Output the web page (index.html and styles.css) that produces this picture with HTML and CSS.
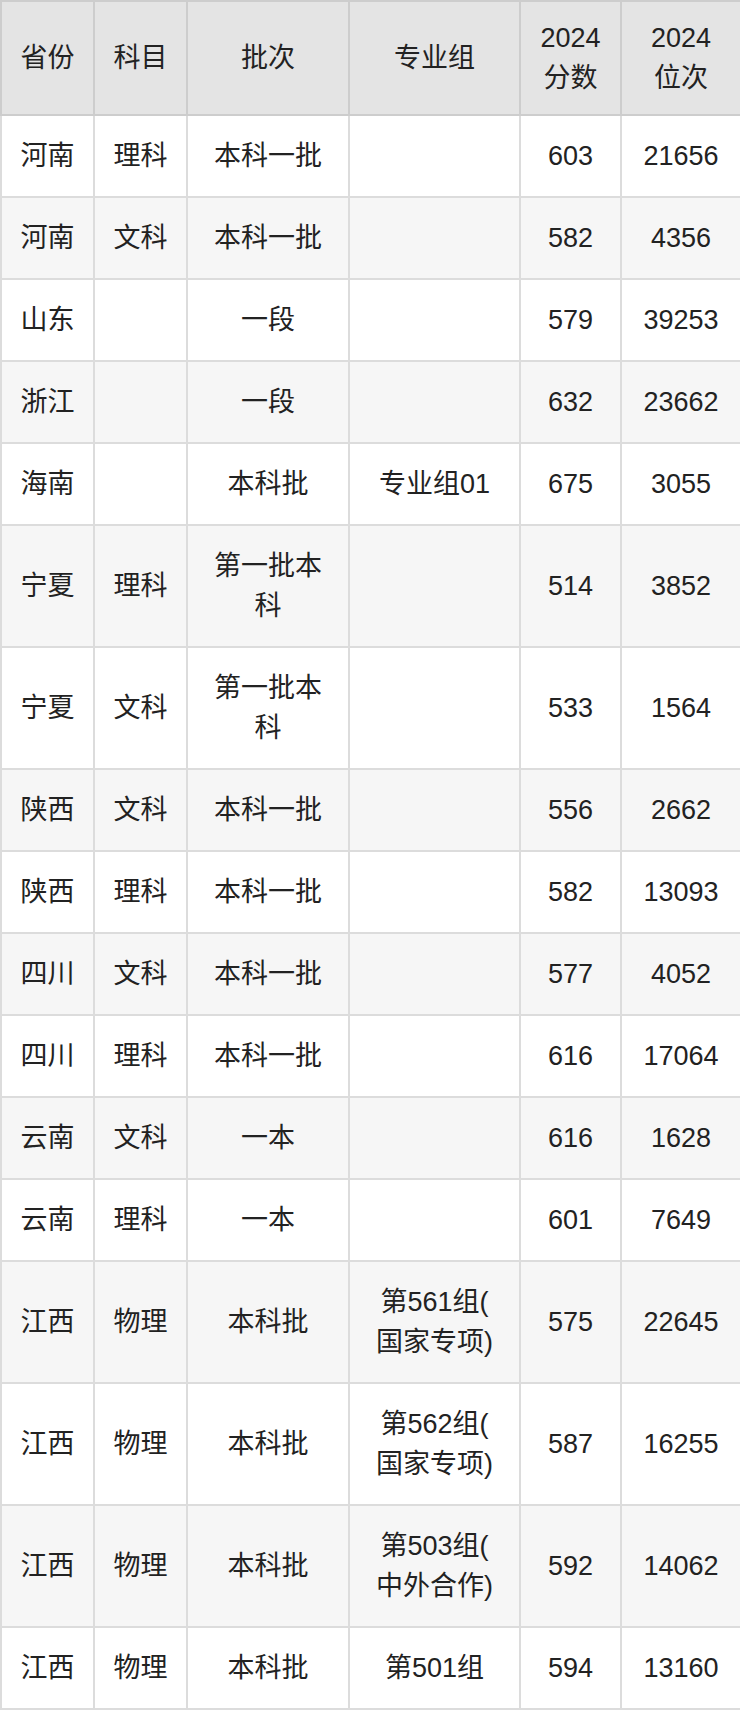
FILE: index.html
```html
<!DOCTYPE html>
<html lang="zh">
<head>
<meta charset="utf-8">
<title>2024 分数位次</title>
<link rel="stylesheet" href="styles.css">
</head>
<body>
<table class="score-table">
  <colgroup>
    <col class="c-prov">
    <col class="c-subj">
    <col class="c-batch">
    <col class="c-group">
    <col class="c-score">
    <col class="c-rank">
  </colgroup>
  <thead>
    <tr>
      <th>省份</th>
      <th>科目</th>
      <th>批次</th>
      <th>专业组</th>
      <th>2024<br>分数</th>
      <th>2024<br>位次</th>
    </tr>
  </thead>
  <tbody>
    <tr><td>河南</td><td>理科</td><td>本科一批</td><td></td><td>603</td><td>21656</td></tr>
    <tr><td>河南</td><td>文科</td><td>本科一批</td><td></td><td>582</td><td>4356</td></tr>
    <tr><td>山东</td><td></td><td>一段</td><td></td><td>579</td><td>39253</td></tr>
    <tr><td>浙江</td><td></td><td>一段</td><td></td><td>632</td><td>23662</td></tr>
    <tr><td>海南</td><td></td><td>本科批</td><td>专业组01</td><td>675</td><td>3055</td></tr>
    <tr><td>宁夏</td><td>理科</td><td>第一批本<br>科</td><td></td><td>514</td><td>3852</td></tr>
    <tr><td>宁夏</td><td>文科</td><td>第一批本<br>科</td><td></td><td>533</td><td>1564</td></tr>
    <tr><td>陕西</td><td>文科</td><td>本科一批</td><td></td><td>556</td><td>2662</td></tr>
    <tr><td>陕西</td><td>理科</td><td>本科一批</td><td></td><td>582</td><td>13093</td></tr>
    <tr><td>四川</td><td>文科</td><td>本科一批</td><td></td><td>577</td><td>4052</td></tr>
    <tr><td>四川</td><td>理科</td><td>本科一批</td><td></td><td>616</td><td>17064</td></tr>
    <tr><td>云南</td><td>文科</td><td>一本</td><td></td><td>616</td><td>1628</td></tr>
    <tr><td>云南</td><td>理科</td><td>一本</td><td></td><td>601</td><td>7649</td></tr>
    <tr><td>江西</td><td>物理</td><td>本科批</td><td>第561组(<br>国家专项)</td><td>575</td><td>22645</td></tr>
    <tr><td>江西</td><td>物理</td><td>本科批</td><td>第562组(<br>国家专项)</td><td>587</td><td>16255</td></tr>
    <tr><td>江西</td><td>物理</td><td>本科批</td><td>第503组(<br>中外合作)</td><td>592</td><td>14062</td></tr>
    <tr><td>江西</td><td>物理</td><td>本科批</td><td>第501组</td><td>594</td><td>13160</td></tr>
  </tbody>
</table>
</body>
</html>
```

FILE: styles.css
```css
html, body {
  margin: 0;
  padding: 0;
  background: #ffffff;
}

body {
  font-family: "Liberation Sans", "Noto Sans CJK SC", sans-serif;
  color: #222222;
}

.score-table {
  width: 740px;
  table-layout: fixed;
  border-collapse: collapse;
  font-size: 27px;
  line-height: 40px;
}

.c-prov { width: 93px; }
.c-subj { width: 93px; }
.c-batch { width: 162px; }
.c-group { width: 171px; }
.c-score { width: 101px; }
.c-rank { width: 120px; }

.score-table th,
.score-table td {
  text-align: center;
  vertical-align: middle;
  padding: 20px 4px;
}

.score-table th {
  font-weight: normal;
  background: #e4e4e4;
  border: 2px solid #cdcdcd;
  padding-top: 16px;
  padding-bottom: 16px;
}

.score-table td {
  border: 2px solid #dcdcdc;
}

.score-table tbody tr:nth-child(even) td {
  background: #f6f6f6;
}
```
